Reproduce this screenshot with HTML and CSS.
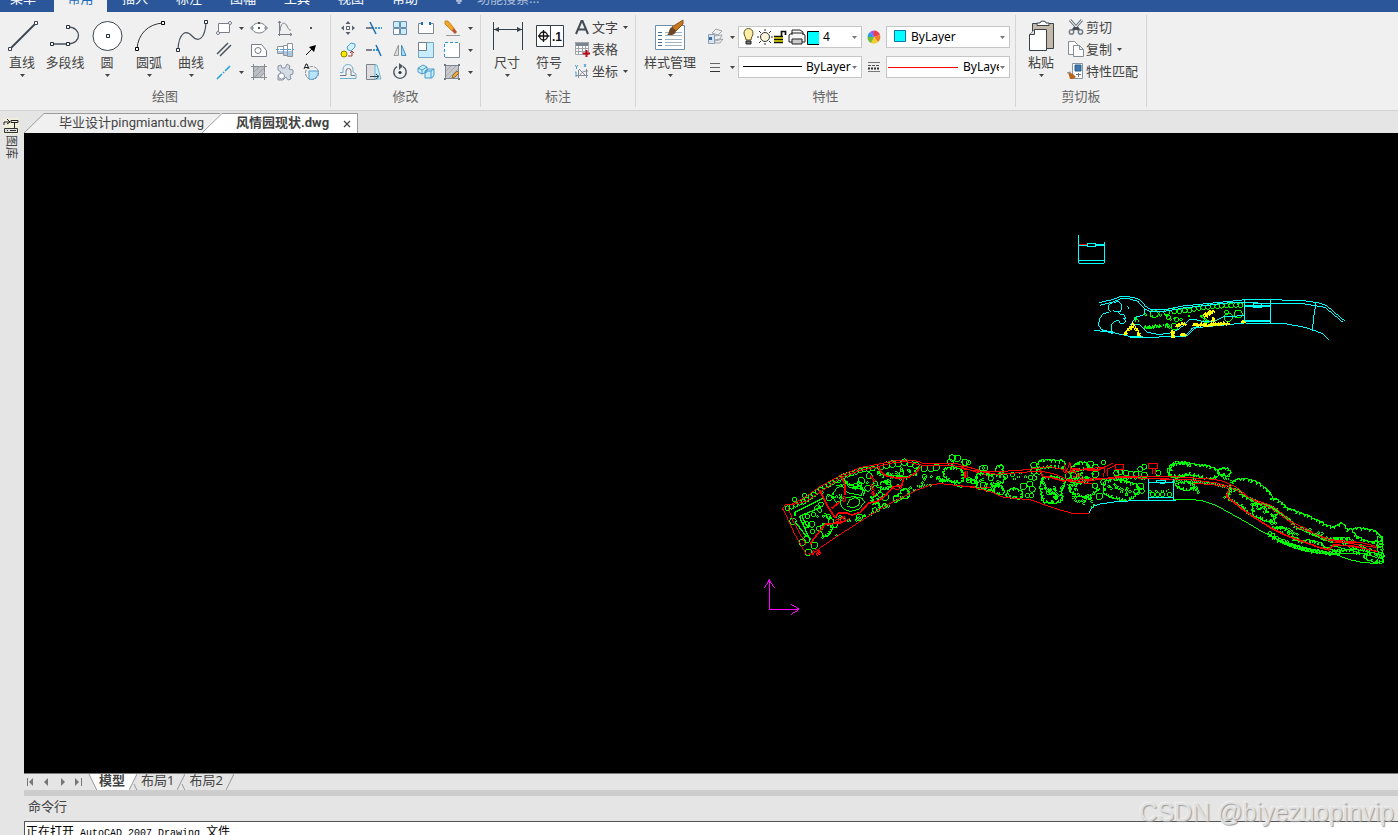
FILE: index.html
```html
<!DOCTYPE html>
<html lang="zh-CN">
<head>
<meta charset="utf-8">
<title>风情园现状.dwg</title>
<link rel="stylesheet" href="styles.css">
</head>
<body>
<svg class="defs" aria-hidden="true">
  <symbol id="caret" viewBox="0 0 5 3"><path d="M0 0h5L2.500 3z" fill="currentColor"/></symbol>
</svg>

<nav class="menubar">
  <button class="menu">菜单</button>
  <button class="menu active">常用</button>
  <button class="menu">插入</button>
  <button class="menu">标注</button>
  <button class="menu">图幅</button>
  <button class="menu">工具</button>
  <button class="menu">视图</button>
  <button class="menu">帮助</button>
  <button class="menu search"><svg width="10" height="16" viewBox="0 0 10 16"><path d="M5 1a4 4 0 0 1 2 7v3H3V8a4 4 0 0 1 2-7zM3.500 13h3" fill="none" stroke="#c3d0e4" stroke-width="1.500"/></svg>功能搜索...</button>
</nav>

<header class="ribbon">
  <section class="group g-draw">
    <div class="tools">
      <button class="big"><svg width="34" height="34"><g fill="#fff" stroke="#3b4450"><path d="M5 30L31 4" stroke-width="1.800"/><path d="M3.500 28.500h3v3h-3zM29.500 2.500h3v3h-3z"/></g></svg>直线<svg class="caret"><use href="#caret"/></svg></button>
      <button class="big"><svg width="34" height="34"><path d="M4 25H20M20 8C34 8 34 25 20 25" fill="none" stroke="#4a525c" stroke-width="1.300"/><path d="M2.500 23.500h3v3h-3zM18.500 23.500h3v3h-3zM18.500 6.500h3v3h-3z" fill="#fff" stroke="#222d38"/></svg>多段线</button>
      <button class="big"><svg width="34" height="34"><circle cx="17.500" cy="17" r="14.500" fill="#fff" stroke="#3b4450"/><path d="M16.500 15.500h3v3h-3z" fill="#fff" stroke="#222d38"/></svg>圆<svg class="caret"><use href="#caret"/></svg></button>
      <button class="big"><svg width="34" height="34"><path d="M5 30C6 15 16 5 31 4" fill="none" stroke="#333"/><path d="M3.500 28.500h3v3h-3zM29.500 2.500h3v3h-3z" fill="#fff" stroke="#000"/></svg>圆弧<svg class="caret"><use href="#caret"/></svg></button>
      <button class="big"><svg width="34" height="34"><path d="M4 30C5 14 12 10 18 17C24 24 31 20 32 4" fill="none" stroke="#4a525c" stroke-width="1.200"/><path d="M2.500 29.500h3v3h-3zM30.500 1.500h3v3h-3z" fill="#fff" stroke="#222d38"/></svg>曲线<svg class="caret"><use href="#caret"/></svg></button>
      <div class="grid grid-draw">
        <button aria-label="矩形"><svg width="18" height="18"><path d="M3.500 4.500h11v9h-11z" fill="#fff" stroke="#777e88"/><g fill="#fff" stroke="#777e88"><circle cx="15" cy="4" r="1.500"/><circle cx="3" cy="14" r="1.500"/></g></svg></button>
        <button aria-label="矩形选项"><svg class="caret"><use href="#caret"/></svg></button>
        <button aria-label="椭圆"><svg width="18" height="18"><ellipse cx="9" cy="9" rx="7" ry="5" fill="#fff" stroke="#777e88"/><path d="M8 3h2v2H8zM8 8h2v2H8z" fill="#555"/><path d="M1 8h2v2H1zM15 8h2v2h-2z" fill="#fff" stroke="#777e88"/></svg></button>
        <button aria-label="公式曲线"><svg width="18" height="18"><path d="M3.500 2v15M2 15.500h14M2 4l1.500-2L5 4M14 14l2 1.500-2 1.500" fill="none" stroke="#777e88"/><path d="M4 12C5 2 9 3 11 7s2 4 4 4" fill="none" stroke="#777e88"/></svg></button>
        <button aria-label="点"><svg width="18" height="18"><path d="M8 8h2v2H8z" fill="#555"/></svg></button>
        <button aria-label="平行线"><svg width="18" height="18"><path d="M2 13L13 2M5 15L16 4" stroke="#4b535c" stroke-width="1.500"/></svg></button>
        <i></i>
        <button aria-label="轮廓"><svg width="18" height="18"><path d="M1.500 3.500h10l5 6v6h-15z" fill="#fff" stroke="#777e88"/><circle cx="8" cy="9.500" r="3" fill="#fff" stroke="#777e88"/></svg></button>
        <button aria-label="轴"><svg width="18" height="18"><path d="M1.500 5.500h6v7h-6zM7.500 4.500h4v10h-4zM11.500 2.500h5v13h-5z" fill="#fff" stroke="#8b949f"/><path d="M2 10h5v2H2zM8 10h3v4H8zM12 10h4v5h-4z" fill="#a9c8e2"/><path d="M0 8.500h18" stroke="#58a4d8" stroke-dasharray="3 1"/></svg></button>
        <button aria-label="箭头"><svg width="18" height="18"><path d="M4 14L10 8" stroke="#111"/><path d="M14 4l-2 7-5-5z" fill="#000"/></svg></button>
        <button aria-label="中心线"><svg width="18" height="18"><path d="M2 16L16 2" stroke="#21a0dc" stroke-width="1.500" stroke-dasharray="7 1.500 1.500 1.500"/></svg></button>
        <button aria-label="中心线选项"><svg class="caret"><use href="#caret"/></svg></button>
        <button aria-label="剖面线"><svg width="18" height="18"><path d="M3 3h11v7q0 4-5 4H3z" fill="#babdc1"/><path d="M1 3.500h16M3.500 1v16M14.500 1v16M1 14.500h16" stroke="#858a91" fill="none"/><path d="M3 10l7-7M5 14l9-9M9 15l6-6" stroke="#9da1a6" fill="none"/></svg></button>
        <button aria-label="齿轮"><svg width="18" height="18"><path d="M2 3l3-1 1 3h3l2-4 3 2-1 3 4 1v4l-3 1 1 4-3 1-2-3-3 3H2v-5l3-3-3-2z" fill="#d4dbe5" stroke="#8995a4"/><circle cx="5.500" cy="13" r="3" fill="#fff" stroke="#8995a4"/></svg></button>
        <button aria-label="局部放大"><svg width="18" height="18"><circle cx="10" cy="10" r="6.500" fill="none" stroke="#7c858e" stroke-dasharray="3 1"/><path d="M7 8h9a7 7 0 0 1-9 8z" fill="#b9e4fa" stroke="#5c9fce"/><path d="M2 6l2-5h1l2 5M3 4.500h3" stroke="#222" fill="none"/></svg></button>
      </div>
    </div>
    <h2>绘图</h2>
  </section>

  <section class="group g-modify">
    <div class="tools">
      <div class="grid grid-modify">
        <button aria-label="移动"><svg width="18" height="18"><path d="M7.500 7.500h3v3h-3z" fill="#fff" stroke="#555d68"/><path d="M9 2l2.500 3h-5zM9 16l-2.500-3h5zM2 9l3-2.500v5zM16 9l-3 2.500v-5z" fill="#59616c"/></svg></button>
        <button aria-label="裁剪"><svg width="18" height="18"><path d="M1 9h8" stroke="#555d68" stroke-width="1.500"/><path d="M10 9h7" stroke="#3b9be0" stroke-width="2" stroke-dasharray="2 1"/><path d="M5 3l6 12" stroke="#1c6fb5" stroke-width="1.500"/></svg></button>
        <button aria-label="阵列"><svg width="18" height="18"><g stroke="#6c8cab"><path d="M2.500 2.500h6v6h-6z" fill="#c8edfc"/><path d="M9.500 2.500h6v6h-6z" fill="#c8edfc"/><path d="M2.500 9.500h6v6h-6z" fill="#fff"/><path d="M9.500 9.500h6v6h-6z" fill="#c8edfc"/></g></svg></button>
        <button aria-label="打断"><svg width="18" height="18"><path d="M5 4.500H1.500v10h15v-10H13" fill="#fff" stroke="#808791"/><path d="M4 3h2v3H4zM12 3h2v3h-2z" fill="#1670bb"/></svg></button>
        <button aria-label="删除"><svg width="18" height="18"><path d="M2 2l3 0 6 7-2 3-7-7z" fill="#f1a326" stroke="#c98d2c"/><path d="M9 12l2-3 3 4-2 2z" fill="#b55632"/><path d="M3 16.500h14" stroke="#999"/></svg></button>
        <button aria-label="删除选项"><svg class="caret"><use href="#caret"/></svg></button>
        <button aria-label="平移复制"><svg width="18" height="18"><path d="M8 6l4-4 4 1v3l-4 4-3-1z" fill="#d4f0fb" stroke="#4aa0d0"/><circle cx="5" cy="13" r="3" fill="#f9e900" stroke="#8d8400"/><path d="M9 15h4v-4M11 12l2-2 2 2" stroke="#a04040" fill="none"/></svg></button>
        <button aria-label="延伸"><svg width="18" height="18"><path d="M1 9h6" stroke="#555d68" stroke-width="1.500"/><path d="M8 9h5" stroke="#3b9be0" stroke-width="2" stroke-dasharray="2 1"/><path d="M11 4l5 11" stroke="#1c6fb5" stroke-width="1.500"/></svg></button>
        <button aria-label="镜像"><svg width="18" height="18"><path d="M7.500 4v10.500H3z" fill="#ddd" stroke="#999"/><path d="M10.500 4v10.500H15z" fill="#9cdcf7" stroke="#4d91b5"/></svg></button>
        <button aria-label="缩放"><svg width="18" height="18"><path d="M1.500 1.500h15v15h-15z" fill="#c8edfc" stroke="#75a4c4"/><path d="M1.500 1.500h8v8h-8z" fill="#fff" stroke="#747d87"/></svg></button>
        <button aria-label="选择"><svg width="18" height="18"><path d="M16.500 2v14.500H2" fill="#fff" stroke="#858b93"/><path d="M1.500 16V1.500H16" fill="#fff" stroke="#2c94d4" stroke-dasharray="3 2"/><path d="M2 2h14v14H2z" fill="#fff"/></svg></button>
        <button aria-label="选择选项"><svg class="caret"><use href="#caret"/></svg></button>
        <button aria-label="等距线"><svg width="18" height="18"><path d="M1 12.500h6V8a2.500 2.500 0 0 1 5 0v4.500h4" stroke="#707a86" fill="none"/><path d="M1 9.500h3V6a5 5 0 0 1 10 1v2l3 2v4.500H1" stroke="#6badd0" fill="none"/></svg></button>
        <button aria-label="拉伸"><svg width="18" height="18"><path d="M1.500 1.500h9v15h-9z" fill="#ddd" stroke="#7b838d"/><path d="M10 2h2l4 14H10z" fill="#c9effc" stroke="#74b8d6"/><path d="M5 13.500h8M11 11l3 2.500-3 2.500" stroke="#34434f" fill="none"/></svg></button>
        <button aria-label="旋转"><svg width="18" height="18"><path d="M6 3.700a6.200 6.200 0 1 0 6 0" fill="none" stroke="#4c545e" stroke-width="1.400"/><path d="M8 0v7l4-4z" fill="#4c545e"/><circle cx="9" cy="9.500" r="1.600" fill="#333"/></svg></button>
        <button aria-label="分解"><svg width="18" height="18"><path d="M1 5l5-3 4 2v5l-5 2-4-2zM1 5l4 2v4M5 7l5-3M8 8l3-2h6v6l-2 3H8zM8 8h6v7M14 8l3-2" fill="#c8edfc" stroke="#4b9bca"/></svg></button>
        <button aria-label="填充编辑"><svg width="18" height="18"><path d="M2.500 2.500h13v13h-13z" fill="#c6c8cb" stroke="#808690"/><path d="M3 8l5-5M3 13L13 3M6 15l9-9" stroke="#aaa"/><path d="M10 12l4-4 2 2-4 4-3 1z" fill="#eda833" stroke="#96713a"/><path d="M1 1h2v2H1zM15 1h2v2h-2zM1 15h2v2H1zM15 15h2v2h-2z" fill="#707780"/></svg></button>
        <button aria-label="填充选项"><svg class="caret"><use href="#caret"/></svg></button>
      </div>
    </div>
    <h2>修改</h2>
  </section>

  <section class="group g-mark">
    <div class="tools">
      <button class="big"><svg width="34" height="34"><path d="M3.500 3v28M32.500 3v28M4 10.500h28" stroke="#35404b"/><path d="M4 10.500l5-2.500v5zM32 10.500L27 8v5z" fill="#35404b"/></svg>尺寸<svg class="caret"><use href="#caret"/></svg></button>
      <button class="big"><svg width="34" height="34"><path d="M4.500 6.500h27v21h-27zM18.500 6v22" fill="#fff" stroke="#35404b"/><circle cx="11.500" cy="17" r="4" fill="none" stroke="#111" stroke-width="1.300"/><path d="M6 17h11.500M11.500 11v12" stroke="#111" stroke-width="1.300"/><text x="20" y="22" class="dim-text">.1</text></svg>符号<svg class="caret"><use href="#caret"/></svg></button>
      <div class="list">
        <button><svg width="20" height="18"><path d="M4 16L9.500 3h1L16 16M6 11.500h8" fill="none" stroke="#434b55" stroke-width="2"/></svg>文字<svg class="caret"><use href="#caret"/></svg></button>
        <button><svg width="20" height="18"><path d="M3 3h14v12H3z" fill="#fff"/><path d="M3 2h14v4H3z" fill="#7c858f"/><path d="M3.500 2.500h13v12h-13zM3 8.500h14M3 11.500h14M6.500 6v9M10.500 6v9M13.500 6v9" stroke="#a0a5ac" fill="none"/><path d="M14.500 10v7M11 13.500h7" stroke="#c00d18" stroke-width="2"/></svg>表格</button>
        <button><svg width="20" height="18"><path d="M6.500 8v8M4 13.500h12M14.500 7v9M7 7l7 7M8 14c1-4 4-5 8-5" stroke="#858c95" fill="none"/><path d="M3 3l1.500 2L6 3M4.500 5v2M12 2l2 3M14 2l-2 3M3 10h1v5" stroke="#4ba0d0" fill="none"/></svg>坐标<svg class="caret"><use href="#caret"/></svg></button>
      </div>
    </div>
    <h2>标注</h2>
  </section>

  <section class="group g-prop">
    <div class="tools">
      <button class="big"><svg width="34" height="34"><path d="M2.500 6.500h29v24h-29z" fill="#fff" stroke="#6f8ea8"/><path d="M5 13.500h4M5 16.500h4M5 20.500h4M5 23.500h4M5 26.500h4" stroke="#436a91"/><path d="M12 13.500h17M12 16.500h17M12 20.500h17M12 23.500h17M12 26.500h17" stroke="#a0b1c0"/><path d="M30 1v4L23 12l-4-4z" fill="#c87820" stroke="#8b531c"/><path d="M19 8l4 4c-1 5-6 4-9 4 3-2 1-6 5-8z" fill="#6d4627"/></svg>样式管理<svg class="caret"><use href="#caret"/></svg></button>
      <div class="props">
        <button aria-label="图层"><svg width="18" height="18"><path d="M6 5l4-4 6 2-4 4zM8 8l8-1-2 4-6 1M9 13l8-2-3 4H8" fill="#eee" stroke="#a0a6ae"/><path d="M2.500 6.500h6v9h-6z" fill="#d6e5f2" stroke="#8d9eaf"/><path d="M3 9h3v3H3z" fill="#376c9e"/></svg></button>
        <button aria-label="图层选项"><svg class="caret"><use href="#caret"/></svg></button>
        <div class="combo">
          <svg width="80" height="20"><path d="M7 13c0-3-2-4-2-7a4 4 0 0 1 9 0c0 3-2 4-2 7z" fill="#ffefa5" stroke="#5e521f"/><path d="M7 14h5v3H7z" fill="#777" stroke="#222"/><circle cx="26" cy="10" r="4.500" fill="#fff4d8" stroke="#333"/><path d="M26 2v2M26 16v2M18 10h2M32 10h2M20 4l2 2M30 14l2 2M32 4l-2 2M22 14l-2 2" stroke="#333"/><path d="M35 9h9v7h-9z" fill="#f2e600"/><path d="M35 9.500h9M35 12.500h9M35 15.500h9M42.500 9V4.500h4V8" stroke="#111" stroke-width="1.700" fill="none"/><path d="M53 8V3h8l3 2v3M50 8l3-2h10l3 2v7H50z" fill="#f5f5f5" stroke="#222"/><path d="M53 12h10v5H53z" fill="#ccc" stroke="#222"/><path d="M68.500 4.500h12v13h-12z" fill="#0ff" stroke="#000"/></svg>
          <select aria-label="当前图层"><option>4</option></select><svg class="caret"><use href="#caret"/></svg>
        </div>
        <button aria-label="颜色"><svg width="18" height="18"><path d="M9 9V2.500A6.500 6.500 0 0 1 15 7z" fill="#ea3f4f"/><path d="M9 9l6-2a6.500 6.500 0 0 1-2 7z" fill="#ef7d26"/><path d="M9 9l4 5a6.500 6.500 0 0 1-7 1z" fill="#f5cc30"/><path d="M9 9l-3 6a6.500 6.500 0 0 1-3.500-6z" fill="#72bd32"/><path d="M9 9H2.500A6.500 6.500 0 0 1 5 4z" fill="#289de3"/><path d="M9 9L5 4a6.500 6.500 0 0 1 4-1.500z" fill="#a855dd"/></svg></button>
        <div class="combo color">
          <svg width="20" height="20"><path d="M7.500 3.500h11v11h-11z" fill="#0ff" stroke="#1673ad"/></svg>
          <select aria-label="颜色"><option>ByLayer</option></select><svg class="caret"><use href="#caret"/></svg>
        </div>
        <button aria-label="线宽"><svg width="18" height="18"><path d="M4 5.500h10M4 9.500h10" stroke="#666"/><path d="M4 13.500h10" stroke="#333"/></svg></button>
        <button aria-label="线宽选项"><svg class="caret"><use href="#caret"/></svg></button>
        <div class="combo">
          <svg width="63" height="20"><path d="M4 9.500h59" stroke="#000"/></svg>
          <select aria-label="线宽"><option>ByLayer</option></select><svg class="caret"><use href="#caret"/></svg>
        </div>
        <button aria-label="线型"><svg width="18" height="18"><path d="M3 4.500h12M3 13.500h12" stroke="#777"/><path d="M3 7.500h12" stroke="#555" stroke-dasharray="3 1"/><path d="M3 10.500h12" stroke="#333" stroke-width="2" stroke-dasharray="2 1"/></svg></button>
        <div class="combo">
          <svg width="72" height="20"><path d="M1 10.500h70" stroke="#f00"/></svg>
          <select aria-label="线型"><option>ByLayer</option></select><svg class="caret"><use href="#caret"/></svg>
        </div>
      </div>
    </div>
    <h2>特性</h2>
  </section>

  <section class="group g-clip">
    <div class="tools">
      <button class="big"><svg width="34" height="34"><path d="M8.500 4.500h21v25h-21z" fill="#c4b8a8" stroke="#39424c"/><path d="M13 6.500V4h3a3 2 0 0 1 6 0h3v2.500z" fill="#fff" stroke="#39424c"/><path d="M10.500 10.500h12v21h-17v-16z" fill="#fff" stroke="#39424c"/><path d="M10.500 10.500v5h-5" fill="#ddd" stroke="#39424c"/></svg>粘贴<svg class="caret"><use href="#caret"/></svg></button>
      <div class="list">
        <button><svg width="20" height="18"><path d="M4 2l9 10M16 2L7 12" stroke="#777f88" stroke-width="3"/><path d="M4 2l8 9M16 2L8 11" stroke="#fff"/><circle cx="5.500" cy="14" r="2.200" fill="none" stroke="#777f88" stroke-width="1.500"/><circle cx="14.500" cy="14" r="2.200" fill="none" stroke="#777f88" stroke-width="1.500"/><path d="M8 9h4l2 3H6z" fill="#434b54"/></svg>剪切</button>
        <button><svg width="20" height="18"><path d="M2.500 1.500h6l3 3v10h-9z" fill="#fff" stroke="#858c95"/><path d="M7.500 5.500h6l4 4v7h-10zM13.500 5.500v4h4" fill="#fff" stroke="#858c95"/></svg>复制<svg class="caret"><use href="#caret"/></svg></button>
        <button><svg width="20" height="18"><path d="M6.500 1.500h10v15h-10z" fill="#fff" stroke="#8793a0"/><path d="M9 3h6v6H9z" fill="#3b77ad" stroke="#285c88"/><path d="M10 12.500h5M12.500 11v4" stroke="#777"/><path d="M2 10l5 2 3 3-3 2H4z" fill="#b8651d"/><path d="M1 11l4-1" stroke="#888"/></svg>特性匹配</button>
      </div>
    </div>
    <h2>剪切板</h2>
  </section>
</header>

<div class="workspace">
  <aside class="sidebar">
    <button class="library"><svg width="16" height="16"><path d="M0 0h16v16H0z" fill="#eeeedb"/><path d="M1 7V4h5M4 1l3 3-3 2M8 2.500h7v2H8zM11.500 4v6" stroke="#222" fill="none"/><path d="M1.500 10.500h13v4h-13z" fill="#ddd" stroke="#333"/><path d="M4 12.500h1M7 12.500h6" stroke="#333"/></svg><span>图库</span></button>
  </aside>
  <main>
    <div class="doc-tabs">
      <div class="doc-tab">
        <svg width="20" height="20"><path d="M0 20L20 0V20z" fill="#f0f0f0"/><path d="M0 20L20 .5" stroke="#9a9a9a"/></svg>
        <button class="title">毕业设计pingmiantu.dwg</button>
      </div>
      <div class="doc-tab current">
        <svg width="20" height="20"><path d="M0 20L20 0V20z" fill="#fff"/><path d="M0 20L20 .5" stroke="#9a9a9a"/></svg>
        <button class="title">风情园现状.dwg</button>
        <button class="close" aria-label="关闭"><svg width="8" height="8"><path d="M1 1l6 6M7 1L1 7" stroke="#444" stroke-width="1.200"/></svg></button>
      </div>
    </div>

    <div class="canvas">
      <svg id="drawing" viewBox="24 133 1374 640" preserveAspectRatio="xMinYMin meet" role="img" aria-label="风情园现状"></svg>
    </div>

    <div class="sheet-tabs">
      <button class="step" aria-label="第一页"><svg width="16" height="10"><path d="M3.500 1v8" stroke="#777"/><path d="M9 1v8L5 5z" fill="#777"/></svg></button>
      <button class="step" aria-label="上一页"><svg width="16" height="10"><path d="M8 1v8L4 5z" fill="#777"/></svg></button>
      <button class="step" aria-label="下一页"><svg width="16" height="10"><path d="M5 1v8l4-4z" fill="#777"/></svg></button>
      <button class="step" aria-label="最后一页"><svg width="16" height="10"><path d="M3 1v8l4-4z" fill="#777"/><path d="M9.500 1v8" stroke="#777"/></svg></button>
      <button class="sheet current"><svg width="10" height="17"><path d="M1 0L9 16h1V0z" fill="#fff"/><path d="M1 0L9 16.500h1" stroke="#999" fill="none"/></svg><span>模型</span><svg width="8" height="17"><path d="M0 16L8 0H0z" fill="#fff"/><path d="M0 16L8 0" stroke="#999"/></svg></button>
      <button class="sheet"><svg width="10" height="17"><path d="M5 10l3 6.500h2" stroke="#999" fill="none"/></svg><span>布局1</span><svg width="8" height="17"><path d="M0 16L8 0" stroke="#999"/></svg></button>
      <button class="sheet"><svg width="10" height="17"><path d="M5 10l3 6.500h2" stroke="#999" fill="none"/></svg><span>布局2</span><svg width="8" height="17"><path d="M0 16L8 0" stroke="#999"/></svg></button>
    </div>

    <div class="command">
      <h2>命令行</h2>
      <div class="log">正在打开<span> AutoCAD 2007 Drawing </span>文件</div>
    </div>
  </main>
</div>
<div class="watermark">CSDN @biyezuopinvip</div>
<script src="drawing.js"></script>
</body>
</html>
```
FILE: styles.css
```css
* { box-sizing: border-box; }

body {
  margin: 0;
  height: 100vh;
  overflow: hidden;
  display: flex;
  flex-direction: column;
  position: relative;
  background: #e5e5e5;
  color: #444;
  font: 13px/18px "Noto Sans", "Noto Sans CJK SC", sans-serif;
}

button, select {
  margin: 0;
  padding: 0;
  border: 0;
  background: none;
  color: inherit;
  font: inherit;
  white-space: nowrap;
}

h2 {
  margin: 0;
  font-size: 13px;
  font-weight: 400;
}

svg { flex: none; display: block; }
.defs { display: none; }
.caret { width: 5px; height: 3px; color: #444; }

.menubar {
  flex: none;
  height: 12px;
  display: flex;
  align-items: flex-end;
  overflow: hidden;
  background: #2b579a;
}
.menu {
  width: 54px;
  height: 24px;
  padding-bottom: 4px;
  line-height: 20px;
  text-indent: -8px;
  color: #fff;
}
.menu.active {
  width: 53px;
  margin-right: 1px;
  text-indent: 0;
  background: #f0f0f0;
  color: #1e6bc0;
}
.menu.active ~ .menu { text-indent: 0; }
.menu.search {
  width: auto;
  padding-left: 22px;
  display: flex;
  align-items: center;
  gap: 13px;
  color: #a9bbd8;
}

.ribbon {
  flex: none;
  display: flex;
  padding: 3px 0;
  background: #f0f0f0;
  border-bottom: 1px solid #d2d2d2;
}
.group {
  display: flex;
  flex-direction: column;
  border-right: 1px solid #d5d5d5;
}
.group h2 { line-height: 21px; text-align: center; color: #666; }
.tools { display: flex; height: 71px; }
.g-draw .tools { padding-right: 6px; }
.g-modify .tools { padding: 0 5px 0 4px; }
.g-mark .tools { padding: 0 1px 0 5px; }
.g-prop .tools { padding-right: 5px; }
.g-clip .tools { padding-right: 8px; }

.big {
  width: 42px;
  padding-top: 4px;
  display: flex;
  flex-direction: column;
  align-items: center;
}
.big .caret { margin-top: 3px; }
.g-draw .big:first-child { width: 44px; }
.g-prop .big { width: 68px; }
.g-clip .big { width: 50px; }
.dim-text { font: bold 12px "Liberation Sans", sans-serif; fill: #111; }

.grid { display: grid; grid-auto-rows: 22px; padding-top: 2px; }
.grid-draw { grid-template-columns: 24px 10px repeat(3, 26px); }
.grid-modify { grid-template-columns: repeat(5, 26px) 10px; }
.grid button { display: flex; align-items: center; justify-content: center; }

.list { display: flex; flex-direction: column; padding-top: 1px; }
.g-mark .list { padding-left: 2px; }
.list button { height: 22px; display: flex; align-items: center; }
.list .caret { margin: 0 6px 0 5px; }

.props {
  padding-top: 11px;
  display: grid;
  grid-template-columns: 22px 12px 124px 24px 124px;
  grid-auto-rows: 22px;
  row-gap: 8px;
}
.props > button { display: flex; align-items: center; justify-content: center; }
.combo {
  display: flex;
  align-items: center;
  padding-right: 4px;
  overflow: hidden;
  background: #fff;
  border: 1px solid #c6c6c6;
}
.combo select {
  flex: 1;
  min-width: 0;
  height: 20px;
  padding-left: 4px;
  appearance: none;
  overflow: hidden;
  text-overflow: clip;
  font-size: 12px;
  color: #000;
}
.combo .caret { margin-left: 1px; color: #777; }

.workspace { flex: 1; min-height: 0; display: flex; }
.sidebar { width: 24px; padding: 7px 0 0 3px; }
.library { display: flex; flex-direction: column; align-items: center; gap: 1px; }
.library span {
  writing-mode: vertical-rl;
  text-orientation: sideways;
  font-size: 12px;
  line-height: 16px;
}

main { flex: 1; min-width: 0; display: flex; flex-direction: column; }

.doc-tabs { flex: none; display: flex; padding-top: 2px; }
.doc-tab { display: flex; height: 20px; }
.doc-tab .title {
  padding: 0 16px 2px 15px;
  font-family: Roboto, "Noto Sans CJK SC", sans-serif;
  line-height: 17px;
  background: #f0f0f0;
  border-top: 1px solid #9a9a9a;
}
.doc-tab.current { margin-left: -18px; position: relative; }
.doc-tab.current .title { padding: 0 14px 2px 14px; background: #fff; font-weight: 700; }
.close {
  padding-right: 6px;
  background: #fff;
  border-top: 1px solid #9a9a9a;
  border-right: 1px solid #9a9a9a;
}

.canvas { flex: 1; min-height: 0; background: #000; overflow: hidden; }
.canvas svg { width: 100%; height: 100%; }

.sheet-tabs {
  flex: none;
  display: flex;
  align-items: center;
  height: 17px;
  border-top: 1px solid #777;
}
.sheet { display: flex; height: 17px; line-height: 13px; }
.sheet + .sheet { margin-left: -8px; }
.sheet span { height: 17px; padding: 0 3px 0 2px; border-bottom: 1px solid #999; }
.sheet.current span { padding: 0 4px 0 1px; background: #fff; font-weight: 700; }

.command { flex: none; border-top: 6px solid #cdcdcd; }
.command h2 { padding-left: 4px; line-height: 21px; height: 25px; }
.log {
  height: 14px;
  padding: 1px 0 0 1px;
  overflow: hidden;
  white-space: pre;
  background: #fff;
  border-top: 1px solid #555;
  border-left: 1px solid #555;
  color: #000;
  font-size: 12px;
}
.log span { font-family: "Liberation Mono", monospace; font-size: 10px; }

.watermark {
  position: absolute;
  right: 4px;
  bottom: 8px;
  font: 25px/30px "Liberation Sans", sans-serif;
  color: #e0e0e0;
  text-shadow: 1px 1px 1px #999, -1px -1px 0 #f0f0f0;
}
```
FILE: drawing.js
```js
const svg = document.getElementById('drawing');
const NS = 'http://www.w3.org/2000/svg';
const G = '#00ff00', R = '#ff0000', C = '#00ffff', Y = '#ffff00', M = '#ff00ff';

// Each view is drawn on a sheet at three times the display scale.
function sheet(x, y) {
  const g = document.createElementNS(NS, 'g');
  g.setAttribute('transform', `translate(${x} ${y}) scale(0.33333)`);
  g.setAttribute('fill', 'none');
  g.setAttribute('stroke-width', 3);
  g.setAttribute('shape-rendering', 'crispEdges');
  svg.append(g);
  return g;
}
function path(g, color, d, width) {
  const p = document.createElementNS(NS, 'path');
  p.setAttribute('d', d);
  p.setAttribute('stroke', color);
  if (width) p.setAttribute('stroke-width', width);
  g.append(p);
}
const ring = (x, y, r) => `M${x - r} ${y}a${r} ${r} 0 1 0 ${2 * r} 0a${r} ${r} 0 1 0 ${-2 * r} 0`;
const trees = (g, list) => path(g, G, list.map(t => ring(...t)).join(''));

let seed = 7;
const rnd = () => (seed = (seed * 16807) % 2147483647) / 2147483647;

// Evenly spaced points along a polyline given as a flat list.
function walk(flat, step) {
  const out = [];
  let carry = 0;
  for (let i = 0; i + 3 < flat.length; i += 2) {
    const dx = flat[i + 2] - flat[i], dy = flat[i + 3] - flat[i + 1];
    const len = Math.hypot(dx, dy);
    let t = carry;
    for (; t < len; t += step) out.push([flat[i] + dx * t / len, flat[i + 1] + dy * t / len]);
    carry = t - len;
  }
  return out;
}
const belt = (g, flat, r, step) => trees(g, walk(flat, step).map(([x, y]) => [x, y + (rnd() - 0.5) * 3, r]));
// Foliage outline: round lobes with a notch between each pair.
function cloud(g, flat, size = 12) {
  const p = walk(flat, size + 1).map(([x, y], i) => i ? [x + (rnd() - 0.5) * 6, y + (rnd() - 0.5) * 6] : [x, y]);
  p.push(flat.slice(-2));
  let d = `M${p[0]}`;
  for (let i = 1; i < p.length; i++) {
    const [ax, ay] = p[i - 1], [bx, by] = p[i];
    const len = Math.hypot(bx - ax, by - ay) || 1;
    const nx = (by - ay) / len, ny = (ax - bx) / len;
    const h = 4 + rnd() * 5;
    d += `C${ax + nx * h - ny * 2} ${ay + ny * h + nx * 2} ${bx + nx * h} ${by + ny * h} ${bx} ${by}`;
    d += `l${-nx * 3} ${-ny * 3}l${nx * 3} ${ny * 3}`;
  }
  path(g, G, d, 4);
}
function shrubs(g, color, flat, spread, step) {
  path(g, color, walk(flat, step).map(([x, y]) => {
    const a = x + (rnd() - 0.5) * spread, b = y + (rnd() - 0.5) * spread;
    return `M${a - 4} ${b}l4 -4l4 4l-4 4z`;
  }).join(''));
}
function tufts(g, color, flat, spread, step) {
  path(g, color, walk(flat, step).map(([x, y]) => {
    const a = x + (rnd() - 0.5) * spread, b = y + (rnd() - 0.5) * spread;
    return `M${a - 5} ${b + 3}l4 -7l5 7M${a} ${b}h6`;
  }).join(''), 4);
}

// Upper plan and detail
const top1 = sheet(1070, 225);
path(top1, C, 'M26 30V115H103V52M26 61H52M77 58H103M77 61H103M26 106H103M52 55h25v9h-25z');
path(top1, R, 'M27 58H51');
belt(top1, [345, 258, 400, 247, 450, 242, 520, 239], 7, 14);
trees(top1, [[253, 266, 12], [290, 262, 9], [296, 278, 7], [313, 259, 8], [329, 260, 7], [320, 284, 7], [313, 305, 10], [475, 277, 13], [470, 262, 6], [505, 267, 12]]);
tufts(top1, G, [228, 308, 275, 303], 5, 7);
shrubs(top1, G, [283, 296, 303, 310], 10, 5);
shrubs(top1, G, [230, 262, 240, 270, 265, 268, 290, 272, 330, 284, 356, 270], 16, 16);
shrubs(top1, G, [398, 275, 415, 290], 14, 3);
shrubs(top1, G, [196, 276, 204, 288], 6, 6);
path(top1, C, 'M88 233L130 223L150 215L170 214L196 219L210 224L226 243L240 253L290 253L340 243L410 236L470 230L525 224H602L700 227L745 233L770 242L824 288M90 241L126 232L150 222L180 222L204 229L222 250L240 259L290 258L340 249L420 240L480 233L525 233L602 235L700 236L765 247L820 293');
path(top1, C, 'M72 316L130 323L180 334L240 337L350 333L378 308L430 303L523 294L602 295L650 297L700 306L735 317L758 326L776 344M180 338H242M95 314L130 326M348 332L366 310L385 304');
path(top1, C, 'M130 232L116 240V254L122 262M118 262L100 266L88 282L86 300L95 315L130 322M132 232L146 229L154 238L156 245L152 258L134 260L128 256M145 262L152 270L163 270L167 280L160 281L167 287L162 295L150 294L146 286L134 289L126 296L124 308L128 326M170 243l9 10');
path(top1, C, 'M222 253L224 265L215 272L198 275L188 290L182 298L186 308L196 300L210 300L222 312L232 322L262 328L295 326L325 314L345 297L358 285L375 283L392 288L430 290L460 275L485 275L523 270M738 232L732 270L727 317');
path(top1, C, 'M523 224V294M602 224V294M523 287H602M523 290H602M523 241H602M523 244H602M550 235h25v12h-25z');
tufts(top1, Y, [190, 300, 166, 328], 6, 6);
tufts(top1, Y, [200, 312, 207, 334], 6, 6);
tufts(top1, Y, [306, 320, 312, 336], 5, 4);
tufts(top1, Y, [322, 302, 345, 298], 6, 4);
tufts(top1, Y, [334, 332, 348, 330], 3, 5);
tufts(top1, Y, [372, 302, 425, 299, 476, 296], 4, 5);
tufts(top1, Y, [404, 270, 432, 258], 12, 4);
tufts(top1, Y, [430, 280, 430, 295], 3, 5);
tufts(top1, Y, [518, 292, 524, 292], 2, 4);

// Park plan: western section
const w = sheet(760, 445);
belt(w, [82, 190, 130, 170, 180, 134, 240, 99, 300, 78, 350, 66], 7, 13);
belt(w, [362, 66, 385, 60, 435, 52, 470, 60], 10, 18);
trees(w, [[103, 164, 7], [133, 151, 7], [99, 229, 10], [127, 292, 10], [145, 322, 10], [163, 301, 10], [141, 283, 10], [142, 214, 7], [160, 208, 7], [139, 238, 9], [155, 238, 9], [157, 260, 7], [175, 250, 7], [208, 158, 9], [183, 178, 7], [179, 196, 6], [170, 188, 6], [213, 229, 8], [298, 217, 10], [344, 195, 7], [373, 183, 7], [376, 157, 10], [323, 130, 9], [304, 107, 10], [328, 92, 9], [346, 115, 7], [298, 117, 7], [288, 121, 7], [361, 149, 8], [384, 112, 8], [424, 86, 7], [493, 70, 10], [512, 70, 10], [529, 67, 10], [493, 95, 7], [577, 39, 10], [592, 40, 10], [571, 52, 9], [616, 52, 9], [625, 52, 7], [206, 214, 7], [225, 241, 7], [670, 121, 10]]);
path(w, G, 'M105 212V202L188 160M118 214L140 205L182 187M118 214L150 285M105 230L140 275M126 215L145 250M140 205L128 209', 4);
path(w, G, 'M228 120L250 125L262 143L305 152L308 132L270 128L258 115L232 128L215 150L228 172L250 165M248 190L240 172L254 158L285 155L306 160L314 170L298 192L270 200L248 190M262 180L268 165L285 158L300 165L296 180L280 188L262 184');
cloud(w, [360, 72, 350, 85, 362, 94, 385, 97, 400, 100, 445, 98, 470, 90], 9);
cloud(w, [350, 145, 330, 155, 336, 175, 355, 180, 355, 160], 10);
cloud(w, [362, 120, 375, 108, 390, 118, 375, 132, 362, 128], 8);
cloud(w, [402, 166, 408, 153, 424, 150, 428, 140, 440, 136, 447, 145, 440, 156, 420, 160, 402, 168], 10);
cloud(w, [552, 75, 575, 72, 605, 72, 610, 90, 605, 106, 575, 106, 558, 98, 552, 78], 9);
cloud(w, [185, 262, 190, 240, 208, 240, 214, 255, 195, 270, 188, 268], 8);
cloud(w, [265, 118, 280, 130, 302, 128, 310, 148], 9);
cloud(w, [620, 108, 635, 108, 645, 115], 12);
shrubs(w, G, [532, 102, 558, 102], 18, 2);
shrubs(w, G, [380, 105, 400, 80, 450, 75, 475, 75], 26, 8);
shrubs(w, G, [235, 95, 260, 115, 300, 120, 340, 130, 370, 140], 32, 9);
shrubs(w, G, [195, 140, 230, 155, 255, 130], 26, 9);
shrubs(w, G, [175, 210, 230, 215, 270, 225, 310, 214, 360, 190, 390, 178], 12, 10);
shrubs(w, G, [415, 110, 425, 135, 460, 128, 515, 98], 18, 9);
shrubs(w, G, [482, 122, 520, 120], 4, 10);
shrubs(w, G, [585, 120, 610, 125], 4, 8);
shrubs(w, G, [190, 275, 236, 273], 5, 40);
path(w, R, 'M66 195L75 180L95 178L130 160L180 125L240 92L300 68L352 58L400 48L440 45L478 49L486 55H590L620 66L660 76L690 82M95 180L140 168L200 128L242 98L300 76L350 66L400 53L440 50L480 60L570 61L600 65L650 82L690 94');
path(w, R, 'M70 193L103 265L140 330M165 322L185 305L230 275L300 230L350 198L400 170L470 135L520 118L545 116L610 124L690 128M85 190L100 230L118 262L138 300');
path(w, R, 'M150 298L170 270L195 238L240 233L258 227M235 205L258 203L275 210L300 202L325 175L355 168L380 148L400 125L425 122L432 98M246 98L254 115L255 150M240 170L215 190M205 188L198 172M178 135L205 188L225 218L235 205M356 68L364 82L380 93L410 99L445 97L466 85L482 65', 5);
path(w, R, 'M240 236L270 220M255 215L235 225M615 80V100M248 155h8v14h-8zM392 125L410 135L425 128');
shrubs(w, R, [150, 324, 182, 325, 170, 312], 8, 7);
shrubs(w, R, [330, 95, 340, 110, 335, 140, 350, 155], 8, 9);
shrubs(w, R, [235, 222, 262, 222], 12, 6);

// Park plan: middle section
const m = sheet(960, 445);
trees(m, [[15, 52, 10], [25, 52, 7], [65, 70, 8], [76, 69, 8], [27, 106, 8], [39, 109, 7], [70, 121, 10], [92, 99, 8], [136, 95, 7], [158, 88, 7], [221, 61, 9], [222, 78, 10], [190, 124, 10], [209, 117, 9], [217, 133, 9], [202, 151, 7], [214, 151, 7], [212, 98, 7], [223, 99, 7], [391, 58, 10], [406, 66, 9], [431, 52, 7], [418, 154, 10], [406, 88, 10], [360, 100, 10], [378, 105, 10], [405, 122, 8], [430, 111, 8], [469, 84, 8], [481, 82, 8], [498, 84, 8], [513, 87, 8], [529, 87, 8], [541, 73, 8], [553, 65, 8], [553, 90, 9], [541, 124, 10], [530, 141, 9], [545, 137, 8], [595, 84, 8], [236, 80, 8], [340, 92, 10], [325, 92, 9]]);
cloud(m, [50, 95, 60, 90, 95, 90, 128, 94, 130, 105, 120, 118, 98, 122, 103, 134, 80, 134, 54, 128, 50, 95], 9);
cloud(m, [105, 128, 126, 127, 129, 143, 110, 143, 102, 134], 8);
cloud(m, [138, 152, 145, 140, 165, 132, 188, 148, 188, 157, 165, 157, 138, 153], 9);
cloud(m, [110, 80, 112, 68, 128, 64, 129, 75, 120, 83], 9);
cloud(m, [232, 66, 234, 52, 270, 47, 308, 52, 312, 66, 290, 65, 234, 67], 10);
cloud(m, [248, 102, 275, 100, 308, 104, 312, 120, 300, 135, 305, 163, 294, 172, 250, 168, 248, 135, 240, 128, 248, 118, 248, 102], 9);
cloud(m, [340, 74, 344, 59, 380, 58, 384, 70, 342, 75], 9);
cloud(m, [418, 128, 402, 144, 370, 152, 342, 145, 330, 128], 9);
cloud(m, [434, 110, 470, 106, 520, 118, 533, 130, 520, 158, 490, 163, 437, 146, 432, 130, 434, 110], 9);
cloud(m, [690, 86, 650, 92, 626, 82, 638, 64, 656, 58, 690, 64], 10);
shrubs(m, G, [250, 115, 270, 145, 290, 160, 285, 125], 14, 4);
shrubs(m, G, [315, 130, 340, 115, 345, 155, 370, 170, 390, 155, 405, 178], 22, 5);
shrubs(m, G, [322, 105, 350, 112, 395, 90], 22, 4);
shrubs(m, G, [445, 130, 470, 125, 495, 145, 510, 130], 14, 5);
shrubs(m, G, [445, 103, 480, 98, 560, 100], 9, 6);
shrubs(m, G, [165, 105, 195, 90, 182, 80], 10, 15);
shrubs(m, G, [60, 105, 90, 125, 115, 98], 14, 8);
shrubs(m, G, [330, 90, 380, 90], 20, 5);
trees(m, [[577, 149, 7], [592, 149, 7], [607, 149, 7], [628, 149, 7], [268, 141, 9]]);
shrubs(m, G, [570, 139, 640, 139], 3, 18);
path(m, R, 'M0 63L30 67L60 78L110 80L180 76L230 70L270 65L315 75L330 82L380 70L430 68L460 53M0 70L50 78L110 88L165 84L215 80L240 78L280 86L320 102L365 109L400 106L470 95L540 93L690 98M0 122L45 128L100 143L130 157L210 164L250 178L300 195L338 205H388M330 110L368 103L440 100L500 98L690 104M325 108L380 115L400 115');
path(m, R, 'M240 74L248 94L275 98L310 108L335 104M335 72L380 74L412 76L435 66', 5);
path(m, R, 'M466 58h25v15h-25zM565 55h28v15h-28zM577 70V88M587 70V88M322 75L330 52M330 82L332 54M435 68L430 95M443 70V93M466 60L440 75M312 58L320 78M18 78V100M22 78V98');
shrubs(m, R, [315, 75, 370, 100, 390, 108], 18, 9);
path(m, C, 'M565 102V165M640 102V165M565 112H640M590 106h26v8h-26zM565 157H640M388 204L392 193L403 183L420 177L470 170L540 166H648');

// Park plan: eastern section
const e = sheet(1160, 445);
cloud(e, [26, 84, 34, 62, 58, 56, 95, 60, 140, 66, 162, 74, 174, 82, 185, 74, 206, 75, 211, 90, 198, 92, 178, 84, 168, 96, 135, 96, 110, 86, 85, 84, 70, 93, 45, 94, 28, 88], 11);
cloud(e, [50, 125, 57, 114, 82, 112, 102, 120, 95, 132, 70, 130, 52, 126], 9);
cloud(e, [220, 118, 224, 108, 240, 103, 288, 115, 326, 141, 334, 164, 358, 170, 370, 189, 415, 205, 468, 225, 490, 242, 520, 250, 546, 237, 562, 258, 590, 250, 650, 262, 664, 277, 663, 348, 645, 346, 612, 336], 12);
cloud(e, [210, 135, 235, 135, 250, 155, 290, 172, 345, 197, 375, 215, 400, 245, 450, 264, 500, 285, 540, 285, 570, 282], 9);
cloud(e, [285, 176, 330, 184, 353, 196, 343, 215, 335, 232, 310, 220, 282, 208, 277, 190, 285, 176], 9);
cloud(e, [335, 250, 365, 252, 395, 272, 400, 287, 430, 292, 450, 287, 490, 305, 520, 320, 565, 318, 600, 325], 9);
cloud(e, [272, 205, 245, 180, 220, 170, 207, 155, 215, 140], 9);
cloud(e, [575, 262, 590, 280, 620, 292, 655, 290], 9);
cloud(e, [612, 332, 640, 327, 665, 332], 9);
cloud(e, [320, 267, 350, 287, 400, 305, 460, 322, 520, 328], 9);
belt(e, [330, 264, 360, 284, 400, 302, 450, 316, 500, 324, 535, 326], 5, 12);
belt(e, [660, 280, 662, 350], 9, 17);
shrubs(e, G, [40, 108, 110, 112, 175, 119, 215, 130], 6, 9);
shrubs(e, G, [100, 92, 115, 145, 100, 120], 8, 12);
shrubs(e, G, [185, 95, 215, 110, 195, 160], 8, 12);
shrubs(e, G, [280, 180, 345, 215, 335, 235, 400, 270, 430, 295], 18, 6);
shrubs(e, G, [455, 260, 550, 290, 600, 310, 650, 310], 20, 6);
path(e, G, 'M40 164L95 163L130 168L170 182L220 210L260 232L300 256L340 276L370 296L405 310L440 319L530 330L570 344L605 352L655 356');
path(e, G, 'M510 300L555 312L605 316L650 325M520 325L610 325L650 338M250 150L280 170L340 188L370 212L410 248L470 275L520 295');
path(e, R, 'M0 95L60 96L160 103L190 109L230 127L270 160L330 180L355 195L390 228L440 252L470 270L520 285L600 292L652 305M0 103L100 105L170 114L210 125L250 148L285 168L330 188L370 216L410 247L460 264L500 285L540 290L600 300L650 308M100 114L165 120L195 125L210 134M525 302L570 300L655 320M520 293L600 292');
path(e, R, 'M206 135L200 155L220 170L250 195L290 222L335 250L380 272L430 290L480 308L505 314L525 298', 5);
path(e, R, 'M525 298L600 308L650 320');
path(e, C, 'M0 106H16V115H0M16 112H40M40 102V166M0 157H40');

// UCS marker
const u = sheet(760, 445);
path(u, M, 'M28 402V493H118M13 428L28 405L43 428M94 478L118 493L94 508');
```
